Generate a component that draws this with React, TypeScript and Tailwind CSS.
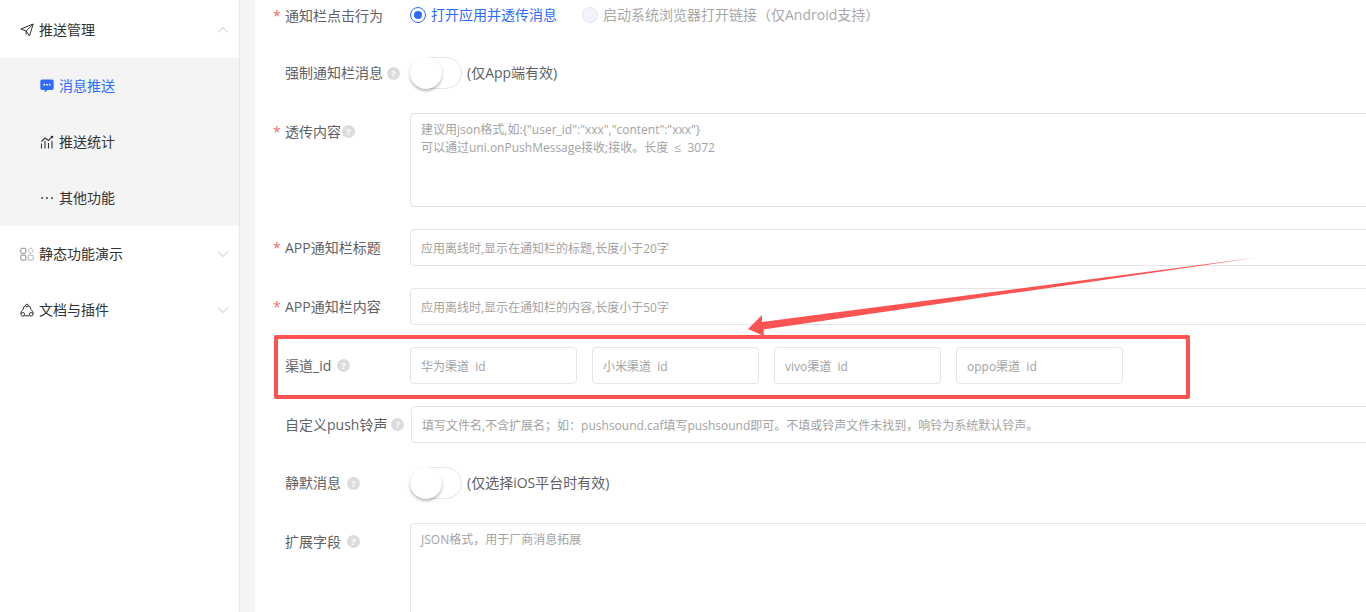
import type { ReactNode } from 'react';

const FONT = "font-['Open_Sans','Noto_Sans_CJK_SC',sans-serif]";

const Help = ({ gap }: { gap: string }) => (
  <span className={`inline-flex h-[13px] w-[13px] shrink-0 items-center justify-center rounded-full bg-[#dcdcdc] text-[9px] leading-none font-bold text-white ${gap}`}>
    ?
  </span>
);

const Chevron = ({ up }: { up?: boolean }) => (
  <svg width="12" height="12" viewBox="0 0 12 12" fill="none" stroke="#c4c4c4" strokeWidth="1" className="ml-auto mr-[10px]">
    <path d={up ? 'M1 8.500 6 3.500 11 8.500' : 'M1 3.500 6 8.500 11 3.500'} />
  </svg>
);

const SendIcon = () => (
  <svg width="14" height="14" viewBox="0 0 14 14" fill="none" stroke="#333" strokeWidth="1">
    <path d="M.8 6 13.200 1 9.500 13 6.200 8 .8 6ZM6.200 8 13.200 1M6.200 8 6 11.500" />
  </svg>
);

const BubbleIcon = () => (
  <svg width="14" height="14" viewBox="0 0 14 14">
    <path d="M2 .5h10A1.700 1.700 0 0 1 13.700 2.200v7A1.700 1.700 0 0 1 12 10.900H7.500L4.800 13.500V10.900H2A1.700 1.700 0 0 1 .3 9.200v-7A1.700 1.700 0 0 1 2 .5Z" fill="#2f6bff" />
    <circle cx="4.300" cy="5.700" r=".9" fill="#fff" />
    <circle cx="7" cy="5.700" r=".9" fill="#fff" />
    <circle cx="9.700" cy="5.700" r=".9" fill="#fff" />
  </svg>
);

const StatsIcon = () => (
  <svg width="14" height="14" viewBox="0 0 14 14" fill="none" stroke="#333" strokeWidth="1.100">
    <path d="M1.500 13.500V8.500M5 13.500V6M8.500 13.500V8M12 13.500V6M1.500 6.500 5 3 8.500 5.500 11 2.500" />
    <circle cx="12" cy="2" r="1.300" fill="#333" stroke="none" />
  </svg>
);

const DotsIcon = () => (
  <svg width="14" height="14" viewBox="0 0 14 14" fill="#444">
    <circle cx="2" cy="7" r="1" />
    <circle cx="7" cy="7" r="1" />
    <circle cx="12" cy="7" r="1" />
  </svg>
);

const AppsIcon = () => (
  <svg width="14" height="14" viewBox="0 0 14 14" fill="none" strokeWidth="1">
    <rect x=".8" y="1.300" width="5" height="5" rx=".8" stroke="#8c8c8c" />
    <rect x=".8" y="8.200" width="5" height="5" rx=".8" stroke="#8c8c8c" />
    <rect x="8.200" y="8.200" width="5" height="5" rx=".8" stroke="#aab4c4" />
    <path d="M10.700 .7 13.500 3.700 10.700 6.700 7.900 3.700Z" stroke="#aab4c4" />
  </svg>
);

const PluginIcon = () => (
  <svg width="14" height="14" viewBox="0 0 14 14" fill="none" stroke="#333" strokeWidth="1">
    <path d="M3.200 6.200a3.800 3.800 0 0 1 7.600 0M3.200 6.200C1.800 7.500.6 9.400 1 11M10.800 6.200c1.400 1.300 2.600 3.200 2.200 4.800M4.400 12.800h5.200" />
    <circle cx="2.800" cy="11.300" r="1.800" />
    <circle cx="11.200" cy="11.300" r="1.800" />
    <circle cx="7" cy="2.500" r="1.300" fill="#fff" />
  </svg>
);

const MenuItem = ({ icon, label, up }: { icon: ReactNode; label: string; up?: boolean }) => (
  <div className="flex h-14 items-center pl-5 text-sm text-[#333]">
    {icon}
    <span className="ml-[5px]">{label}</span>
    <Chevron up={up} />
  </div>
);

const SubItem = ({ icon, label, active }: { icon: ReactNode; label: string; active?: boolean }) => (
  <div className={`flex h-14 items-center pl-[40px] text-sm ${active ? 'text-[#2f6bff]' : 'text-[#333]'}`}>
    {icon}
    <span className="ml-[5px]">{label}</span>
  </div>
);

const Label = ({ text, required, help, width = 'w-[127px]' }: { text: string; required?: boolean; help?: string; width?: string }) => (
  <div className={`relative flex h-[37px] shrink-0 items-center pl-[2px] text-sm text-[#606266] ${width}`}>
    {required && <span className="absolute left-[-10px] text-sm text-[#f56c6c]">*</span>}
    <span>{text}</span>
    {help && <Help gap={help} />}
  </div>
);

const Toggle = () => (
  <div className="relative h-8 w-[52px] shrink-0 rounded-full border border-[#e5e5e5] bg-white">
    <div className="absolute top-[-1px] left-[-1px] h-8 w-8 rounded-full bg-white shadow-[0_2px_3px_rgba(0,0,0,0.28)]" />
  </div>
);

const TextInput = ({ placeholder }: { placeholder: string }) => (
  <input
    readOnly
    placeholder={placeholder}
    className="h-[37px] w-[1100px] shrink-0 rounded border border-[#e5e5e5] bg-white px-[10px] pt-[2px] text-xs outline-none placeholder:text-[#a3a3a3]"
  />
);

const ChannelInput = ({ placeholder }: { placeholder: string }) => (
  <input
    readOnly
    placeholder={placeholder}
    className="h-[37px] w-[167px] shrink-0 rounded border border-[#e5e5e5] bg-white px-[10px] pt-[2px] text-xs outline-none placeholder:text-[#a3a3a3]"
  />
);

const TextArea = ({ placeholder, height }: { placeholder: string; height: string }) => (
  <textarea
    readOnly
    placeholder={placeholder}
    className={`w-[1100px] shrink-0 resize-none rounded border border-[#e5e5e5] bg-white px-[10px] py-[7px] text-xs leading-[18px] outline-none placeholder:text-[#a3a3a3] ${height}`}
  />
);

export default function App() {
  return (
    <div className={`relative flex h-[612px] w-[1366px] overflow-hidden bg-[#f4f4f4] ${FONT}`}>
      <aside className="h-full w-[240px] shrink-0 border-r border-[#e8e8e8] bg-white pt-[2px]">
        <MenuItem icon={<SendIcon />} label="推送管理" up />
        <div className="bg-[#f4f4f4]">
          <SubItem icon={<BubbleIcon />} label="消息推送" active />
          <SubItem icon={<StatsIcon />} label="推送统计" />
          <SubItem icon={<DotsIcon />} label="其他功能" />
        </div>
        <MenuItem icon={<AppsIcon />} label="静态功能演示" />
        <MenuItem icon={<PluginIcon />} label="文档与插件" />
      </aside>

      <main className="ml-[15px] flex min-w-0 flex-1 flex-col overflow-hidden bg-white pl-[28px]">
        <div className="mb-[23px] flex h-[35px] items-start">
          <div className="mt-[-3px]">
            <Label text="通知栏点击行为" required />
          </div>
          <div className="flex h-[30px] items-center text-sm">
            <span className="flex h-4 w-4 items-center justify-center rounded-full border border-[#2f6bff]">
              <span className="h-2 w-2 rounded-full bg-[#2f6bff]" />
            </span>
            <span className="ml-[5px] text-[#2f6bff]">打开应用并透传消息</span>
            <span className="ml-[25px] h-4 w-4 rounded-full border border-[#e0e4ee] bg-[#f3f5fb]" />
            <span className="ml-[5px] text-[#a8a8a8]">启动系统浏览器打开链接（仅Android支持）</span>
          </div>
        </div>

        <div className="mb-6 flex h-8 items-center">
          <Label text="强制通知栏消息" help="ml-1" />
          <Toggle />
          <span className="ml-[5px] text-sm text-[#606266]">(仅App端有效)</span>
        </div>

        <div className="mb-[22px] flex items-start">
          <Label text="透传内容" required help="ml-[1px]" />
          <TextArea height="h-[94px]" placeholder={'建议用json格式,如:{"user_id":"xxx","content":"xxx"}\n可以通过uni.onPushMessage接收;接收。长度  ≤  3072'} />
        </div>

        <div className="mb-[22px] flex items-center">
          <Label text="APP通知栏标题" required />
          <TextInput placeholder="应用离线时,显示在通知栏的标题,长度小于20字" />
        </div>

        <div className="mb-[22px] flex items-center">
          <Label text="APP通知栏内容" required />
          <TextInput placeholder="应用离线时,显示在通知栏的内容,长度小于50字" />
        </div>

        <div className="mb-[22px] flex items-center">
          <Label text="渠道_id" help="ml-[6px]" />
          <div className="flex gap-[15px]">
            <ChannelInput placeholder="华为渠道  id" />
            <ChannelInput placeholder="小米渠道  id" />
            <ChannelInput placeholder="vivo渠道  id" />
            <ChannelInput placeholder="oppo渠道  id" />
          </div>
        </div>

        <div className="mb-6 flex items-center">
          <Label text="自定义push铃声" help="ml-1" width="w-[128px]" />
          <TextInput placeholder="填写文件名,不含扩展名；如：pushsound.caf填写pushsound即可。不填或铃声文件未找到，响铃为系统默认铃声。" />
        </div>

        <div className="mb-6 flex h-8 items-center">
          <Label text="静默消息" help="ml-[6px]" />
          <Toggle />
          <span className="ml-[5px] text-sm text-[#606266]">(仅选择iOS平台时有效)</span>
        </div>

        <div className="flex items-start">
          <Label text="扩展字段" help="ml-[6px]" />
          <TextArea height="h-[120px]" placeholder="JSON格式，用于厂商消息拓展" />
        </div>
      </main>

      {/* annotation drawn over the form */}
      <div className="absolute top-[335px] left-[274px] h-[64px] w-[916px] rounded-[2px] border-[4px] border-[#fc5353]" />
      <svg className="absolute top-0 left-0" width="1366" height="612" fill="#fc5353">
        <path d="M1257 257.500 762 322 762 315 748 329 764 336 763.500 329.500Z" />
      </svg>
    </div>
  );
}
